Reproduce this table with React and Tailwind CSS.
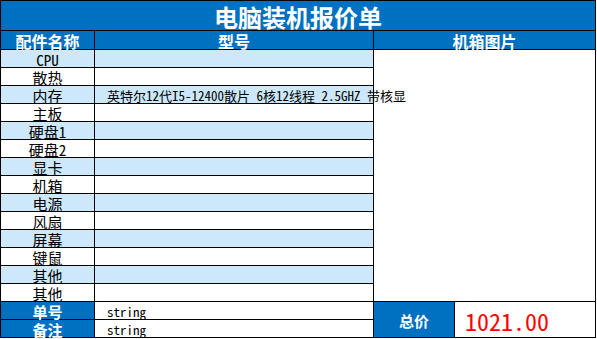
import React from "react";

const BLUE = "bg-[#0070c0]";
const LIGHT = "bg-[#cce8fa]";
const FONT = { fontFamily: '"Noto Sans Mono CJK SC", "Noto Sans CJK SC", "DejaVu Sans Mono", monospace' };

const ITEMS = [
  { name: "CPU", model: "" },
  { name: "散热", model: "" },
  { name: "内存", model: "英特尔12代I5-12400散片 6核12线程 2.5GHZ 带核显" },
  { name: "主板", model: "" },
  { name: "硬盘1", model: "" },
  { name: "硬盘2", model: "" },
  { name: "显卡", model: "" },
  { name: "机箱", model: "" },
  { name: "电源", model: "" },
  { name: "风扇", model: "" },
  { name: "屏幕", model: "" },
  { name: "键鼠", model: "" },
  { name: "其他", model: "" },
  { name: "其他", model: "" },
];

function ItemRow({ item, shaded }) {
  return (
    <div className={"flex h-[18px] border-b border-black " + (shaded ? LIGHT : "bg-white")}>
      <div className="w-[94px] shrink-0 border-r border-black flex items-center justify-center pt-[2px] text-[15px] leading-none text-black">
        {item.name}
      </div>
      <div className="flex-1 min-w-0 flex items-center pl-[12px] pt-[1px] text-[13px] leading-none text-black whitespace-nowrap">
        {item.model && <span className="relative z-10">{item.model}</span>}
      </div>
    </div>
  );
}

function InfoRow({ label, value, last }) {
  return (
    <div className={last ? "flex h-[17px]" : "flex h-[18px] border-b border-black"}>
      <div className={"w-[94px] shrink-0 border-r border-black flex items-center justify-center pt-[2px] text-white font-bold text-[15px] leading-none " + BLUE}>
        {label}
      </div>
      <div className="flex-1 min-w-0 flex items-center pl-[12px] pt-[1px] text-[13px] leading-none text-black bg-white">
        {value}
      </div>
    </div>
  );
}

export default function App() {
  return (
    <div className="bg-white w-[597px] h-[339px]" style={FONT}>
      <div className="w-[596px] h-[338px] border border-black flex flex-col">
        <div className={"h-[30px] shrink-0 border-b border-black flex items-center justify-center pt-[3px] text-white font-bold text-[24px] leading-none " + BLUE}>
          电脑装机报价单
        </div>

        <div className={"flex h-[19px] shrink-0 border-b border-black text-white font-bold text-[16px] leading-none " + BLUE}>
          <div className="w-[94px] shrink-0 border-r border-black flex items-center justify-center pt-[2px]">配件名称</div>
          <div className="w-[279px] shrink-0 border-r border-black flex items-center justify-center pt-[2px]">型号</div>
          <div className="flex-1 flex items-center justify-center pt-[2px]">机箱图片</div>
        </div>

        <div className="flex shrink-0">
          <div className="w-[373px] shrink-0 border-r border-black">
            {ITEMS.map((it, i) => (
              <ItemRow key={i} item={it} shaded={i % 2 === 0} />
            ))}
          </div>
          <div className="flex-1 bg-white border-b border-black" />
        </div>

        <div className="flex flex-1 min-h-0">
          <div className="w-[373px] shrink-0 border-r border-black">
            <InfoRow label="单号" value="string" />
            <InfoRow label="备注" value="string" last />
          </div>
          <div className={"w-[81px] shrink-0 border-r border-black flex items-center justify-center pt-[2px] text-white font-bold text-[15px] leading-none " + BLUE}>
            总价
          </div>
          <div className="flex-1 flex items-center pl-[10px] pt-[2px] text-[24px] leading-none text-[#ff0000] bg-white">
            1021.00
          </div>
        </div>
      </div>
    </div>
  );
}
